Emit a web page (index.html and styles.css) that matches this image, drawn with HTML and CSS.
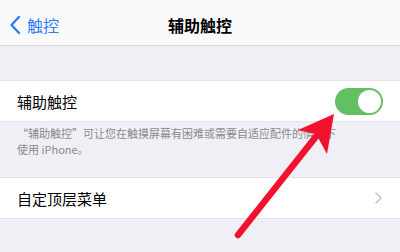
FILE: index.html
```html
<!DOCTYPE html>
<html lang="zh">
<head>
<meta charset="utf-8">
<link rel="stylesheet" href="styles.css">
</head>
<body>
<div class="page">
  <header class="nav">
    <div class="back">
      <svg class="back-icon" width="12" height="20" viewBox="0 0 12 20"><path d="M10 2 L2.5 10 L10 18" fill="none" stroke="#2f7cf6" stroke-width="2.4" stroke-linecap="round" stroke-linejoin="round"/></svg>
      <span>触控</span>
    </div>
    <div class="title">辅助触控</div>
  </header>
  <div class="spacer"></div>
  <div class="row">
    <span class="label">辅助触控</span>
    <div class="toggle"><div class="knob"></div></div>
  </div>
  <p class="footer">“辅助触控”可让您在触摸屏幕有困难或需要自适应配件的情况下<br>使用 iPhone。</p>
  <div class="row">
    <span class="label">自定顶层菜单</span>
    <svg class="chev" width="7" height="12" viewBox="0 0 7 12"><path d="M1 1 L6 6 L1 11" fill="none" stroke="#c4c4c9" stroke-width="1.6" stroke-linecap="round" stroke-linejoin="round"/></svg>
  </div>
  <svg class="arrow" width="400" height="252" viewBox="0 0 400 252">
    <line x1="238" y1="235" x2="318" y2="134" stroke="#f2112e" stroke-width="6.5" stroke-linecap="round"/>
    <polygon points="334,114 298,130 316,134 327,154" fill="#f2112e"/>
  </svg>
</div>
</body>
</html>
```
FILE: styles.css
```css
html, body {
  margin: 0;
  padding: 0;
}
body {
  width: 400px;
  height: 252px;
  overflow: hidden;
  background: #f0eff5;
  font-family: "Noto Sans CJK SC", "Noto Sans", sans-serif;
  color: #000;
}
.page {
  position: relative;
  width: 400px;
  height: 252px;
}
.nav {
  height: 46px;
  box-sizing: border-box;
  padding-top: 5px;
  background: #fafafa;
  border-bottom: 1px solid #dcdcde;
  display: flex;
  align-items: center;
  position: relative;
}
.back {
  display: flex;
  align-items: center;
  gap: 6px;
  padding-left: 9px;
  color: #2f7cf6;
  font-size: 16px;
}
.back-icon {
  display: block;
}
.title {
  position: absolute;
  left: 0;
  right: 0;
  top: 5px;
  bottom: 0;
  display: flex;
  align-items: center;
  justify-content: center;
  font-size: 16px;
  font-weight: 700;
  pointer-events: none;
}
.spacer {
  height: 34px;
}
.row {
  height: 40px;
  background: #fff;
  border-top: 1px solid #e4e4e7;
  border-bottom: 1px solid #e4e4e7;
  display: flex;
  align-items: center;
  justify-content: space-between;
  padding: 0 17px;
}
.label {
  font-size: 15px;
}
.toggle {
  width: 48px;
  height: 27px;
  border-radius: 14px;
  background: #62c063;
  display: flex;
  align-items: center;
  justify-content: flex-end;
  padding: 0 2px;
  box-sizing: border-box;
}
.knob {
  width: 23px;
  height: 23px;
  border-radius: 50%;
  background: #fff;
}
.chev {
  display: block;
  margin-right: 1px;
}
.footer {
  margin: 0 0 20px;
  padding: 3px 17px 0;
  font-size: 11px;
  line-height: 16px;
  color: #8a8a8e;
}
.arrow {
  position: absolute;
  left: 0;
  top: 0;
}
```
